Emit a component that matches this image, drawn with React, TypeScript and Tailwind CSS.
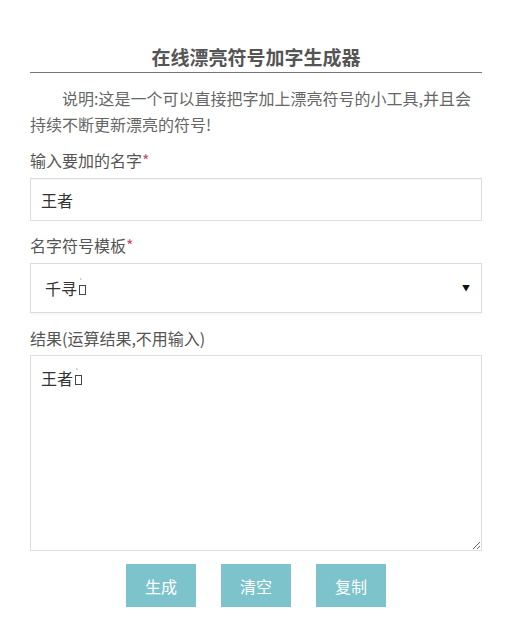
import React from "react";

const Tofu = () => (
  <span className="relative inline-block ml-[1px]" style={{ width: 9, height: 14 }}>
    <span className="absolute left-[1px] bottom-[0px] w-[7px] h-[10px] border border-[#444]" />
    <span className="absolute left-[2px] top-[-3px] text-[8px] leading-[8px] text-[#333]">ʿ</span>
  </span>
);

export default function App() {
  const font = { fontFamily: '"Noto Sans CJK SC", "Noto Sans", "Liberation Sans", sans-serif' };
  return (
    <div className="w-[506px] h-[619px] bg-white overflow-hidden" style={font}>
      <div className="pl-[30px] pr-[24px] pt-[45px]">
        <div className="border-b border-[#777] pb-[3px] text-center text-[19px] leading-[24px] font-bold text-[#555]">
          在线漂亮符号加字生成器
        </div>
        <p className="mt-[12px] text-[16px] leading-[26px] text-[#666] indent-[32px]">
          说明:这是一个可以直接把字加上漂亮符号的小工具,并且会持续不断更新漂亮的符号!
        </p>
        <div className="mt-[11px] text-[16px] leading-[24px] text-[#555]">
          输入要加的名字<span className="text-[#c0506a]">*</span>
        </div>
        <input
          readOnly
          value="王者"
          className="mt-[6px] block w-full h-[43px] border border-[#ddd] px-[10px] text-[16px] text-[#333] outline-none shadow-[inset_0_1px_1px_rgba(0,0,0,0.04)]"
          style={font}
        />
        <div className="mt-[12px] text-[16px] leading-[24px] text-[#555]">
          名字符号模板<span className="text-[#c0506a]">*</span>
        </div>
        <div className="mt-[6px] flex items-center justify-between w-full h-[50px] border border-[#ddd] pl-[14px] pr-[11px] text-[16px] text-[#333] shadow-[0_1px_2px_rgba(0,0,0,0.06)]">
          <span className="flex items-center">
            千寻
            <Tofu />
          </span>
          <span className="text-[8px] text-[#111]">▼</span>
        </div>
        <div className="mt-[13px] text-[16px] leading-[24px] text-[#555]">
          结果(运算结果,不用输入)
        </div>
        <div className="mt-[5px] w-full h-[196px] border border-[#ddd] px-[10px] pt-[10px] text-[16px] leading-[24px] text-[#333] resize overflow-auto">
          <span className="flex items-center">
            王者
            <Tofu />
          </span>
        </div>
        <div className="mt-[13px] flex justify-center gap-[25px]">
          {["生成", "清空", "复制"].map((t) => (
            <div
              key={t}
              className="w-[70px] h-[43px] flex items-center justify-center bg-[#7cc3cb] text-white text-[16px]"
            >
              {t}
            </div>
          ))}
        </div>
      </div>
    </div>
  );
}
